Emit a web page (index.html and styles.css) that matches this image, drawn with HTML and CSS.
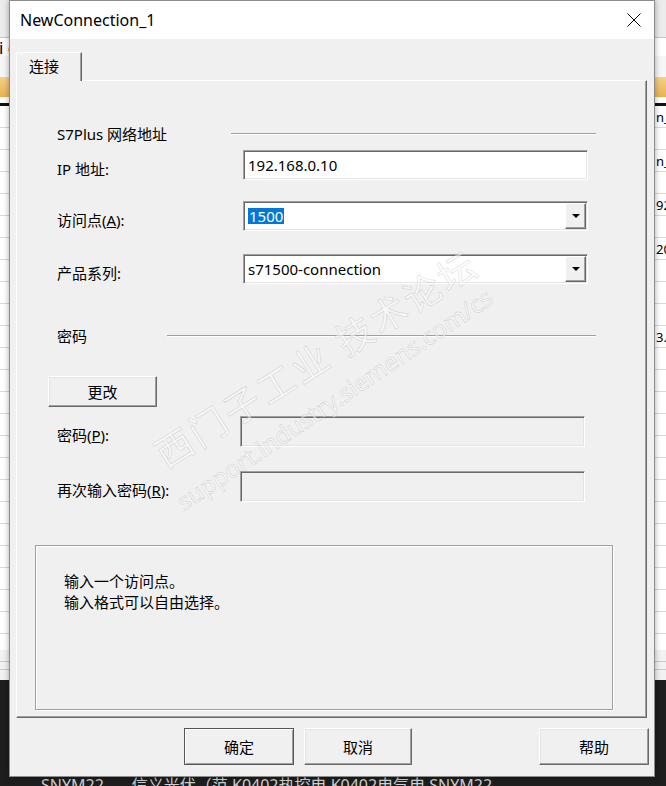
FILE: index.html
```html
<!DOCTYPE html>
<html lang="zh-CN">
<head>
<meta charset="utf-8">
<title>NewConnection_1</title>
<link rel="stylesheet" href="styles.css">
</head>
<body>
<div class="desk">
  <div class="app">
    <div class="app-head"></div>
    <div class="app-row r1"><span class="lt">i c</span></div>
    <div class="app-row r2"></div>
    <div class="app-orange"></div>
    <div class="app-gap"></div>
    <div class="app-rule"></div>
    <div class="grid-rows">
      <div class="grow"><span class="rt">n_</span></div>
      <div class="grow"></div>
      <div class="grow"><span class="rt">n_</span></div>
      <div class="grow"></div>
      <div class="grow"><span class="rt">92</span></div>
      <div class="grow"></div>
      <div class="grow"><span class="rt">20</span></div>
      <div class="grow"></div>
      <div class="grow"></div>
      <div class="grow"></div>
      <div class="grow"><span class="rt">3.</span></div>
      <div class="grow"></div>
      <div class="grow"></div>
      <div class="grow"></div>
      <div class="grow"></div>
      <div class="grow"></div>
      <div class="grow"></div>
      <div class="grow"></div>
      <div class="grow"></div>
      <div class="grow"></div>
      <div class="grow"></div>
      <div class="grow"></div>
      <div class="grow"></div>
      <div class="grow"></div>
      <div class="grow"></div>
    </div>
    <div class="app-foot"><div class="fl"></div><div class="fl"></div></div>
  </div>
  <div class="taskbar">
    <span class="tb1">SNYM22</span><span class="tb2">信义光伏（范 K0402热控电 K0402电气电 SNYM22</span>
  </div>

  <div class="dialog">
    <div class="titlebar">
      <span class="title">NewConnection_1</span>
      <svg class="close" width="14" height="14" viewBox="0 0 14 14"><path d="M0.5 0.5 L13.5 13.5 M13.5 0.5 L0.5 13.5" stroke="#000" stroke-width="1" fill="none"/></svg>
    </div>
    <div class="dbody">
      <div class="tabs"><div class="tab">连接</div></div>
      <div class="panel">
        <div class="sect s1"><span>S7Plus 网络地址</span><i class="etch"></i></div>
        <div class="frow ip"><span class="lbl">IP 地址:</span><div class="field">192.168.0.10</div></div>
        <div class="frow acc"><span class="lbl">访问点(<u>A</u>):</span><div class="field combo"><span class="sel">1500</span><span class="drop"><i class="tri"></i></span></div></div>
        <div class="frow prod"><span class="lbl">产品系列:</span><div class="field combo"><span>s71500-connection</span><span class="drop"><i class="tri"></i></span></div></div>
        <div class="sect s2"><span>密码</span><i class="etch"></i></div>
        <div class="chg-row"><button class="btn chg">更改</button></div>
        <div class="frow pw1"><span class="lbl">密码(<u>P</u>):</span><div class="field dis"></div></div>
        <div class="frow pw2"><span class="lbl">再次输入密码(<u>R</u>):</span><div class="field dis"></div></div>
        <div class="info">
          <p>输入一个访问点。</p>
          <p>输入格式可以自由选择。</p>
        </div>
      </div>
      <div class="btnrow">
        <button class="btn ok">确定</button>
        <button class="btn cancel">取消</button>
        <button class="btn help">帮助</button>
      </div>
    </div>
  </div>

  <div class="wm wm-cn">西门子工业 技术论坛</div>
  <div class="wm wm-url">support.industry.siemens.com/cs</div>
</div>
</body>
</html>
```

FILE: styles.css
```css
* { box-sizing: border-box; }
html, body { margin: 0; padding: 0; }
body {
  font-family: "Noto Sans", "Noto Sans CJK SC", sans-serif;
  font-size: 15px;
  color: #000;
  background: #1f1f1f;
}
.desk {
  position: relative;
  width: 666px;
  height: 786px;
  overflow: hidden;
  display: flex;
  flex-direction: column;
}

/* background application */
.app {
  height: 680px;
  background: #fff;
  display: flex;
  flex-direction: column;
}
.app-head { height: 38px; background: #ececec; border-bottom: 1px solid #c6c6c6; }
.app-row { height: 19px; }
.app-row.r1 { height: 18px; display: flex; align-items: center; }
.app-row.r2 { height: 21px; background: #f6f6f6; }
.lt { font-size: 17px; line-height: 1; margin-left: -1px; }
.app-orange { height: 20px; background: linear-gradient(#f6d28a, #eab152); }
.app-gap { height: 6px; }
.app-rule { height: 3px; background: #111; }
.grid-rows { flex: 1; overflow: hidden; }
.grow {
  height: 22px;
  border-bottom: 1px solid #dadada;
  display: flex;
  align-items: center;
}
.rt { margin-left: 656px; font-size: 13px; white-space: nowrap; }
.app-foot { height: 30px; background: #f2f2f2; padding-top: 4px; }
.fl { height: 8px; border-bottom: 1px solid #c8c8c8; }
.taskbar {
  flex: 1;
  background: #1e1e1e;
  color: #cfcfcf;
  font-size: 16px;
  padding: 95px 0 0 41px;
  white-space: nowrap;
  line-height: 20px;
}
.tb2 { margin-left: 28px; }

/* dialog window */
.dialog {
  position: absolute;
  left: 9px;
  top: 0;
  width: 646px;
  height: 777px;
  border: 1px solid #8c8c8c;
  background: #f0f0f0;
  box-shadow: 0 0 6px rgba(0, 0, 0, 0.35);
  display: flex;
  flex-direction: column;
}
.titlebar {
  height: 38px;
  background: #fff;
  display: flex;
  align-items: center;
  justify-content: space-between;
  padding: 0 13px 0 10px;
}
.title { font-size: 16px; line-height: 1; }
.close { display: block; }

.dbody {
  flex: 1;
  padding: 13px 7px 0 6px;
  display: flex;
  flex-direction: column;
}
.tabs { display: flex; height: 28px; position: relative; z-index: 1; }
.tab {
  width: 66px;
  height: 29px;
  background: #f0f0f0;
  border-top: 1px solid #fff;
  border-left: 1px solid #fff;
  border-right: 1px solid #696969;
  box-shadow: inset -1px 0 #a0a0a0;
  padding: 2px 0 0 12px;
  line-height: 22px;
}
.panel {
  height: 638px;
  border-top: 1px solid #fff;
  border-left: 1px solid #fff;
  border-right: 1px solid #696969;
  border-bottom: 1px solid #696969;
  box-shadow: inset -1px -1px #a0a0a0;
  padding: 0 0 0 40px;
  display: flex;
  flex-direction: column;
}

.sect { display: grid; align-items: center; height: 20px; }
.sect.s1 { margin-top: 42px; grid-template-columns: 174px 365px; }
.sect.s2 { margin-top: 41px; grid-template-columns: 110px 429px; }
.etch { display: block; height: 2px; border-top: 1px solid #a0a0a0; border-bottom: 1px solid #fff; margin-top: 1px; }

.frow { display: grid; align-items: center; height: 30px; }
.lbl { padding-top: 6px; white-space: nowrap; }
.frow.ip { margin-top: 7px; grid-template-columns: 186px 345px; }
.frow.acc { margin-top: 21px; grid-template-columns: 186px 345px; }
.frow.prod { margin-top: 23px; grid-template-columns: 186px 345px; }
.frow.pw1 { margin-top: 9px; height: 31px; grid-template-columns: 183px 345px; }
.frow.pw2 { margin-top: 24px; height: 31px; grid-template-columns: 183px 345px; }

.field {
  height: 100%;
  background: #fff;
  border-top: 1px solid #a0a0a0;
  border-left: 1px solid #a0a0a0;
  border-right: 1px solid #fff;
  border-bottom: 1px solid #fff;
  box-shadow: inset 1px 1px #696969, inset -1px -1px #e3e3e3;
  display: flex;
  align-items: center;
  padding: 0 0 0 4px;
  font-size: 15px;
  white-space: nowrap;
}
.field.dis { background: #f0f0f0; }
.combo { position: relative; }
.sel {
  background: #0078d7;
  color: #fff;
  height: 16px;
  line-height: 16px;
  padding: 0 1px;
}
.drop {
  position: absolute;
  right: 1px;
  top: 1px;
  bottom: 1px;
  width: 21px;
  background: #f0f0f0;
  border-top: 1px solid #fff;
  border-left: 1px solid #fff;
  border-right: 1px solid #696969;
  border-bottom: 1px solid #696969;
  box-shadow: inset -1px -1px #a0a0a0;
  display: flex;
  align-items: center;
  justify-content: center;
}
.tri {
  display: block;
  width: 0;
  height: 0;
  border-left: 4px solid transparent;
  border-right: 4px solid transparent;
  border-top: 4px solid #000;
}

.btn {
  font-family: "Noto Sans", "Noto Sans CJK SC", sans-serif;
  font-size: 15px;
  color: #000;
  background: #f0f0f0;
  border-top: 1px solid #fff;
  border-left: 1px solid #fff;
  border-right: 1px solid #696969;
  border-bottom: 1px solid #696969;
  box-shadow: inset -1px -1px #a0a0a0, inset 1px 1px #e3e3e3;
  padding: 0;
  margin: 0;
}
.chg-row { margin-top: 31px; margin-left: -9px; display: flex; }
.btn.chg { width: 109px; height: 31px; }

.info {
  margin-top: 43px;
  margin-left: -22px;
  width: 578px;
  height: 165px;
  border: 1px solid #a0a0a0;
  box-shadow: inset 1px 1px #fff, 1px 1px #fff;
  padding: 25px 0 0 28px;
}
.info p { margin: 0; line-height: 21px; }

.btnrow {
  margin: 10px -2px 0 0;
  display: flex;
  padding: 0 0 0 168px;
  gap: 10px;
}
.btnrow .btn { height: 37px; width: 110px; }
.btn.ok {
  border: 1px solid #555;
  box-shadow: inset 1px 1px #fff, inset -1px -1px #a0a0a0;
}
.btn.cancel { width: 108px; }
.btn.help { margin-left: auto; }

/* watermark overlay */
.wm {
  position: absolute;
  white-space: pre;
  line-height: 1;
  color: rgba(255, 255, 255, 0.5);
  -webkit-text-stroke: 0.7px rgba(150, 150, 150, 0.32);
  transform-origin: 0 100%;
  pointer-events: none;
}
.wm-cn {
  left: 168px;
  top: 436px;
  font-size: 37px;
  letter-spacing: 3px;
  transform: rotate(-32deg);
}
.wm-url {
  left: 186px;
  top: 490px;
  font-size: 24px;
  transform: rotate(-34deg);
}
```
